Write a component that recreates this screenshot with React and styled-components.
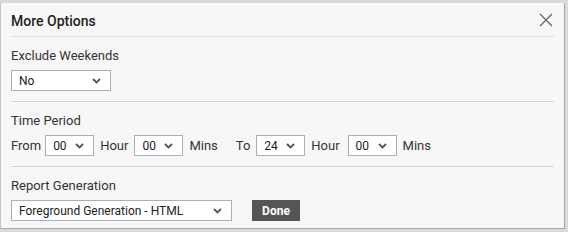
import React from 'react';
import styled, { createGlobalStyle } from 'styled-components';

const Global = createGlobalStyle`
  html, body {
    margin: 0;
    padding: 0;
    background: #d9d9d9;
    font-family: Roboto, "Liberation Sans", Arial, sans-serif;
  }
`;

const Panel = styled.div`
  box-sizing: border-box;
  margin-top: 3px;
  width: 565px;
  height: 226px;
  background: #f7f7f7;
  border-left: 1px solid #c4c4c4;
  border-right: 1px solid #a9a9a9;
  border-bottom: 1px solid #a9a9a9;
  padding: 0 10px;
  color: #333;
`;

const Header = styled.div`
  display: flex;
  align-items: center;
  justify-content: space-between;
  height: 33px;
  border-bottom: 1px solid #dcdcdc;
`;

const Title = styled.div`
  font-size: 14px;
  font-weight: 500;
  color: #222;
  padding-top: 2px;
`;

const Close = styled.button`
  border: 0;
  background: none;
  padding: 0;
  width: 16px;
  height: 16px;
  cursor: pointer;
  display: flex;
`;

const Section = styled.div`
  padding: 11px 0 10px;
  border-bottom: ${({ $last }) => ($last ? 'none' : '1px solid #d6d6d6')};
`;

const Label = styled.div`
  font-size: 13px;
  line-height: 15px;
  color: #333;
  margin-bottom: 7px;
`;

const Row = styled.div`
  display: flex;
  align-items: center;
`;

const Text = styled.span`
  font-size: 13px;
  color: #333;
  margin-right: ${({ $mr }) => $mr || 6}px;
`;

const SelectBox = styled.div`
  box-sizing: border-box;
  width: ${({ $w }) => $w}px;
  height: 21px;
  background: #fff;
  border: 1px solid #aab0ba;
  display: flex;
  align-items: center;
  justify-content: space-between;
  padding: 0 9px 0 7px;
  font-size: 12px;
  color: #222;
  margin-right: ${({ $mr }) => $mr || 0}px;
`;

const Done = styled.button`
  height: 21px;
  width: 48px;
  background: #555;
  color: #fff;
  border: 0;
  font-family: inherit;
  font-size: 12px;
  font-weight: 700;
  margin-left: 20px;
  padding: 0;
`;

const Chevron = () => (
  <svg width="9" height="6" viewBox="0 0 9 6">
    <path d="M1 1 L4.5 4.5 L8 1" fill="none" stroke="#555" strokeWidth="1.8" />
  </svg>
);

const Select = ({ value, w, mr }) => (
  <SelectBox $w={w} $mr={mr}>
    <span>{value}</span>
    <Chevron />
  </SelectBox>
);

export default function App() {
  return (
    <>
      <Global />
      <Panel>
        <Header>
          <Title>More Options</Title>
          <Close aria-label="close">
            <svg width="16" height="16" viewBox="0 0 16 16">
              <path d="M2 2 L14 14 M14 2 L2 14" stroke="#666" strokeWidth="1.3" />
            </svg>
          </Close>
        </Header>
        <Section>
          <Label>Exclude Weekends</Label>
          <Select value="No" w={100} />
        </Section>
        <Section>
          <Label>Time Period</Label>
          <Row>
            <Text $mr={4}>From</Text>
            <Select value="00" w={49} mr={6} />
            <Text>Hour</Text>
            <Select value="00" w={49} mr={6} />
            <Text $mr={18}>Mins</Text>
            <Text>To</Text>
            <Select value="24" w={49} mr={6} />
            <Text $mr={8}>Hour</Text>
            <Select value="00" w={49} mr={6} />
            <Text>Mins</Text>
          </Row>
        </Section>
        <Section $last>
          <Label>Report Generation</Label>
          <Row>
            <Select value="Foreground Generation - HTML" w={221} />
            <Done>Done</Done>
          </Row>
        </Section>
      </Panel>
    </>
  );
}
